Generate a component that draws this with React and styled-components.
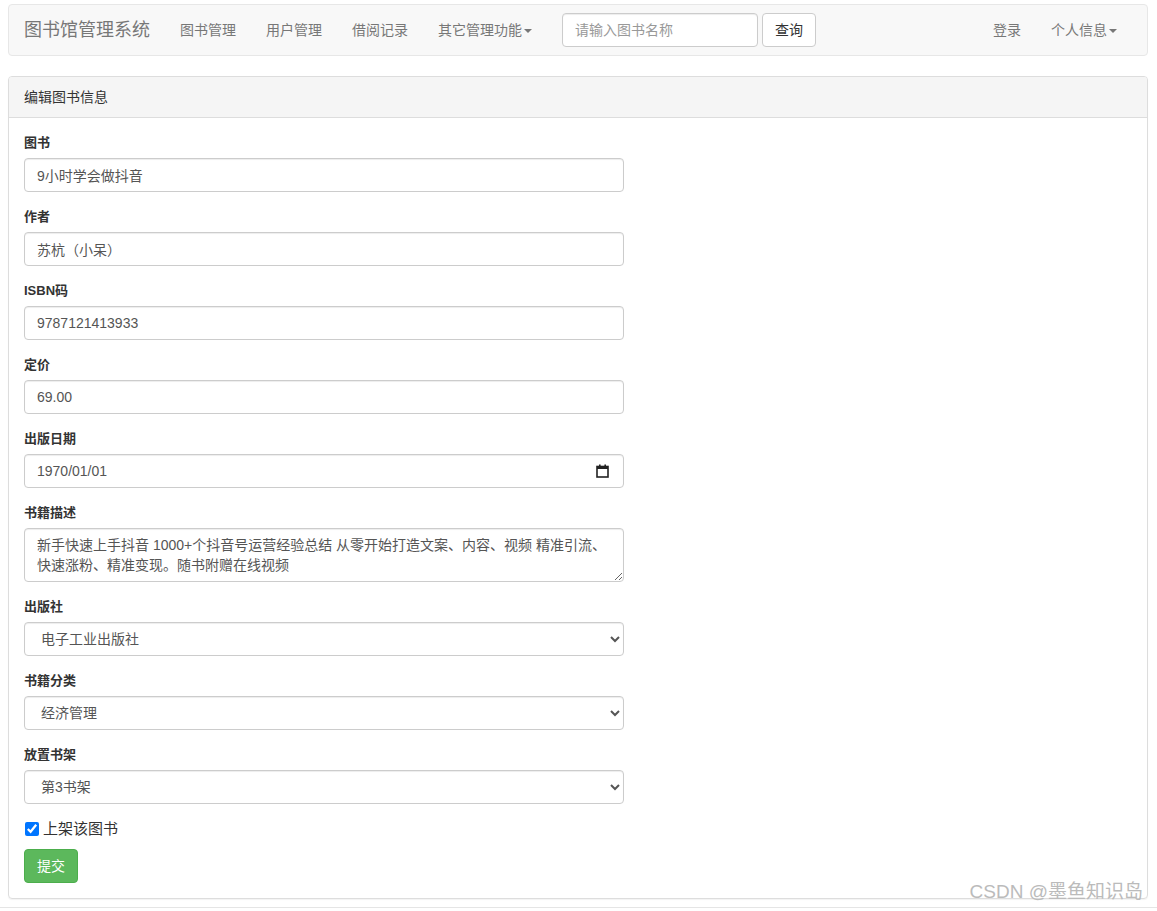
import React from "react";
import styled, { createGlobalStyle } from "styled-components";

const Global = createGlobalStyle`
  html, body { margin: 0; padding: 0; background: #fff; }
  body {
    font-family: "Liberation Sans", Arial, "Noto Sans CJK SC", sans-serif;
    font-size: 14px;
    line-height: 1.42857;
    color: #333;
  }
  * { box-sizing: border-box; }
`;

const Page = styled.div`
  padding: 4px 9px 0 8px;
`;

const Navbar = styled.nav`
  display: flex;
  align-items: center;
  height: 52px;
  background: #f8f8f8;
  border: 1px solid #e7e7e7;
  border-radius: 4px;
  margin-bottom: 20px;
`;

const Brand = styled.a`
  padding: 15px;
  font-size: 18px;
  line-height: 20px;
  color: #777;
  text-decoration: none;
`;

const NavList = styled.ul`
  display: flex;
  list-style: none;
  margin: 0;
  padding: 0;
  margin-left: ${(p) => (p.$right ? "auto" : "0")};
  margin-right: ${(p) => (p.$right ? "15px" : "0")};
`;

const NavLink = styled.a`
  display: block;
  padding: 15px;
  line-height: 20px;
  color: #777;
  text-decoration: none;
  white-space: nowrap;
`;

const Caret = styled.span`
  display: inline-block;
  width: 0;
  height: 0;
  margin-left: 2px;
  vertical-align: middle;
  border-top: 4px solid #777;
  border-right: 4px solid transparent;
  border-left: 4px solid transparent;
`;

const SearchForm = styled.form`
  display: flex;
  gap: 4px;
  padding: 8px 15px;
`;

const SearchInput = styled.input`
  width: 196px;
  height: 34px;
  padding: 6px 12px;
  font: inherit;
  font-size: 14px;
  color: #555;
  border: 1px solid #ccc;
  border-radius: 4px;
  box-shadow: inset 0 1px 1px rgba(0,0,0,.075);
  &::placeholder { color: #999; }
`;

const Button = styled.button`
  height: 34px;
  padding: 6px 12px;
  font: inherit;
  font-size: 14px;
  line-height: 20px;
  border-radius: 4px;
  border: 1px solid ${(p) => (p.$success ? "#4cae4c" : "#ccc")};
  background: ${(p) => (p.$success ? "#5cb85c" : "#fff")};
  color: ${(p) => (p.$success ? "#fff" : "#333")};
  cursor: pointer;
`;

const Panel = styled.section`
  border: 1px solid #ddd;
  border-radius: 4px;
  box-shadow: 0 1px 1px rgba(0,0,0,.05);
  margin-bottom: 8px;
`;

const PanelHeading = styled.div`
  padding: 10px 15px;
  background: #f5f5f5;
  border-bottom: 1px solid #ddd;
  border-radius: 3px 3px 0 0;
  color: #333;
  line-height: 20px;
`;

const PanelBody = styled.div`
  padding: 15px;
`;

const Group = styled.div`
  width: 600px;
  margin-bottom: 15px;
`;

const Label = styled.label`
  display: block;
  margin-bottom: 5px;
  font-weight: bold;
  font-size: 13px;
  line-height: 20px;
`;

const fieldCss = `
  display: block;
  width: 100%;
  padding: 6px 12px;
  font-family: "Liberation Sans", Arial, "Noto Sans CJK SC", sans-serif;
  font-size: 14px;
  line-height: 20px;
  color: #555;
  background: #fff;
  border: 1px solid #ccc;
  border-radius: 4px;
  box-shadow: inset 0 1px 1px rgba(0,0,0,.075);
`;

const Input = styled.input`
  ${fieldCss}
  height: 34px;
`;

const DateBox = styled.div`
  ${fieldCss}
  display: flex;
  align-items: center;
  height: 34px;
  padding-right: 14px;
`;

const DateText = styled.input`
  flex: 1;
  min-width: 0;
  border: 0;
  padding: 0;
  outline: none;
  background: transparent;
  font: inherit;
  color: #555;
`;

const TextArea = styled.textarea`
  ${fieldCss}
  height: 54px;
  resize: vertical;
`;

const Select = styled.select`
  ${fieldCss}
  height: 34px;
`;

const CheckRow = styled.label`
  display: flex;
  align-items: center;
  gap: 4px;
  height: 20px;
  margin: 3px 0 10px;
  font-size: 15px;
  color: #333;
`;

const Check = styled.input`
  width: 14px;
  height: 14px;
  margin: 0 0 0 1px;
`;

const Footer = styled.div`
  border-top: 1px solid #e5e5e5;
  margin: 0 -9px 0 -8px;
  height: 3px;
`;

const Watermark = styled.div`
  position: absolute;
  right: 14px;
  top: 880px;
  font-size: 19px;
  line-height: 24px;
  color: #bbb;
  font-family: "Liberation Sans", "Noto Sans CJK SC", sans-serif;
`;

const CalendarIcon = () => (
  <svg width="13" height="14" viewBox="0 0 13 14" aria-hidden="true">
    <rect x="1" y="2.5" width="11" height="10.5" fill="none" stroke="#222" strokeWidth="1.6" />
    <rect x="1" y="2" width="11" height="3" fill="#222" />
    <rect x="3" y="0.5" width="1.6" height="3" fill="#222" />
    <rect x="8.4" y="0.5" width="1.6" height="3" fill="#222" />
  </svg>
);

export default function App() {
  return (
    <>
      <Global />
      <Page>
        <Navbar>
          <Brand href="#">图书馆管理系统</Brand>
          <NavList>
            <li><NavLink href="#">图书管理</NavLink></li>
            <li><NavLink href="#">用户管理</NavLink></li>
            <li><NavLink href="#">借阅记录</NavLink></li>
            <li><NavLink href="#">其它管理功能<Caret /></NavLink></li>
          </NavList>
          <SearchForm onSubmit={(e) => e.preventDefault()}>
            <SearchInput placeholder="请输入图书名称" />
            <Button type="button">查询</Button>
          </SearchForm>
          <NavList $right>
            <li><NavLink href="#">登录</NavLink></li>
            <li><NavLink href="#">个人信息<Caret /></NavLink></li>
          </NavList>
        </Navbar>

        <Panel>
          <PanelHeading>编辑图书信息</PanelHeading>
          <PanelBody>
            <Group>
              <Label>图书</Label>
              <Input defaultValue="9小时学会做抖音" />
            </Group>
            <Group>
              <Label>作者</Label>
              <Input defaultValue="苏杭（小呆）" />
            </Group>
            <Group>
              <Label>ISBN码</Label>
              <Input defaultValue="9787121413933" />
            </Group>
            <Group>
              <Label>定价</Label>
              <Input defaultValue="69.00" />
            </Group>
            <Group>
              <Label>出版日期</Label>
              <DateBox>
                <DateText defaultValue="1970/01/01" />
                <CalendarIcon />
              </DateBox>
            </Group>
            <Group>
              <Label>书籍描述</Label>
              <TextArea
                rows={2}
                defaultValue="新手快速上手抖音 1000+个抖音号运营经验总结 从零开始打造文案、内容、视频 精准引流、快速涨粉、精准变现。随书附赠在线视频"
              />
            </Group>
            <Group>
              <Label>出版社</Label>
              <Select defaultValue="电子工业出版社">
                <option>电子工业出版社</option>
              </Select>
            </Group>
            <Group>
              <Label>书籍分类</Label>
              <Select defaultValue="经济管理">
                <option>经济管理</option>
              </Select>
            </Group>
            <Group>
              <Label>放置书架</Label>
              <Select defaultValue="第3书架">
                <option>第3书架</option>
              </Select>
            </Group>
            <CheckRow>
              <Check type="checkbox" defaultChecked />
              上架该图书
            </CheckRow>
            <Button $success type="button">提交</Button>
          </PanelBody>
        </Panel>
        <Footer />
      </Page>
      <Watermark>CSDN @墨鱼知识岛</Watermark>
    </>
  );
}
